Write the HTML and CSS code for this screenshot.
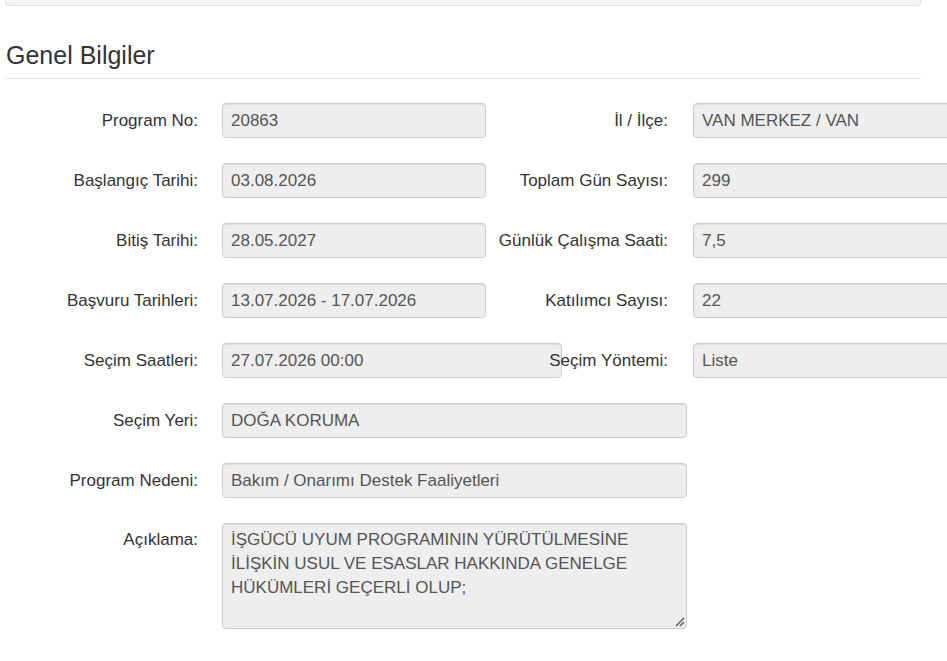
FILE: index.html
```html
<!DOCTYPE html>
<html lang="tr">
<head>
<meta charset="utf-8">
<title>Genel Bilgiler</title>
<link rel="stylesheet" href="styles.css">
</head>
<body>
<div class="page">
  <div class="well"></div>
  <div class="legend">Genel Bilgiler</div>

  <div class="row">
    <div class="lbl">Program No:</div>
    <div class="field">20863</div>
    <div class="lbl lbl-r">İl / İlçe:</div>
    <div class="field field-r">VAN MERKEZ / VAN</div>
  </div>

  <div class="row">
    <div class="lbl">Başlangıç Tarihi:</div>
    <div class="field">03.08.2026</div>
    <div class="lbl lbl-r">Toplam Gün Sayısı:</div>
    <div class="field field-r">299</div>
  </div>

  <div class="row">
    <div class="lbl">Bitiş Tarihi:</div>
    <div class="field">28.05.2027</div>
    <div class="lbl lbl-r">Günlük Çalışma Saati:</div>
    <div class="field field-r">7,5</div>
  </div>

  <div class="row">
    <div class="lbl">Başvuru Tarihleri:</div>
    <div class="field">13.07.2026 - 17.07.2026</div>
    <div class="lbl lbl-r">Katılımcı Sayısı:</div>
    <div class="field field-r">22</div>
  </div>

  <div class="row">
    <div class="lbl">Seçim Saatleri:</div>
    <div class="field field-mid">27.07.2026 00:00</div>
    <div class="lbl lbl-r">Seçim Yöntemi:</div>
    <div class="field field-r">Liste</div>
  </div>

  <div class="row">
    <div class="lbl">Seçim Yeri:</div>
    <div class="field field-wide">DOĞA KORUMA</div>
  </div>

  <div class="row">
    <div class="lbl">Program Nedeni:</div>
    <div class="field field-wide">Bakım / Onarımı Destek Faaliyetleri</div>
  </div>

  <div class="row row-top">
    <div class="lbl lbl-top">Açıklama:</div>
    <div class="field field-wide textarea">İŞGÜCÜ UYUM PROGRAMININ YÜRÜTÜLMESİNE<br>İLİŞKİN USUL VE ESASLAR HAKKINDA GENELGE<br>HÜKÜMLERİ GEÇERLİ OLUP;<svg class="grip" width="12" height="12" viewBox="0 0 12 12"><path d="M11 3 L3 11 M11 7 L7 11" stroke="#555" stroke-width="1.4" fill="none"/></svg></div>
  </div>
</div>
</body>
</html>
```

FILE: styles.css
```css
html, body {
  margin: 0;
  padding: 0;
  background: #fff;
  overflow: hidden;
}

body {
  font-family: "Liberation Sans", Arial, sans-serif;
  font-size: 17px;
  color: #333;
  width: 947px;
  height: 661px;
}

.page {
  padding-left: 5px;
  width: 916px;
}

.well {
  height: 5px;
  background: #f5f5f5;
  border: 1px solid #e3e3e3;
  border-top: none;
  border-radius: 0 0 4px 4px;
}

.legend {
  margin-top: 31px;
  font-size: 25px;
  line-height: 36px;
  padding-left: 1px;
  padding-bottom: 5px;
  border-bottom: 1px solid #e5e5e5;
  margin-bottom: 24px;
  color: #333;
}

.row {
  display: flex;
  align-items: center;
  height: 35px;
  margin-bottom: 25px;
}

.row-top {
  align-items: flex-start;
  height: auto;
}

.lbl {
  width: 193px;
  flex-shrink: 0;
  text-align: right;
  white-space: nowrap;
  color: #333;
}

.lbl-top {
  padding-top: 5px;
  line-height: 24px;
}

.lbl-r {
  width: 182px;
}

.field {
  box-sizing: border-box;
  flex-shrink: 0;
  margin-left: 24px;
  width: 264px;
  height: 35px;
  line-height: 33px;
  padding: 0 8px;
  background: #eee;
  border: 1px solid #ccc;
  border-radius: 4px;
  box-shadow: inset 0 1px 1px rgba(0, 0, 0, 0.075);
  color: #555;
  white-space: nowrap;
  overflow: hidden;
}

.field-r {
  margin-left: 25px;
}

.field-mid {
  width: 340px;
  margin-right: -76px;
}

.field-wide {
  width: 465px;
}

.textarea {
  position: relative;
  height: 106px;
  line-height: 24px;
  padding-top: 4px;
  white-space: normal;
}

.grip {
  position: absolute;
  right: 1px;
  bottom: 1px;
}
```
